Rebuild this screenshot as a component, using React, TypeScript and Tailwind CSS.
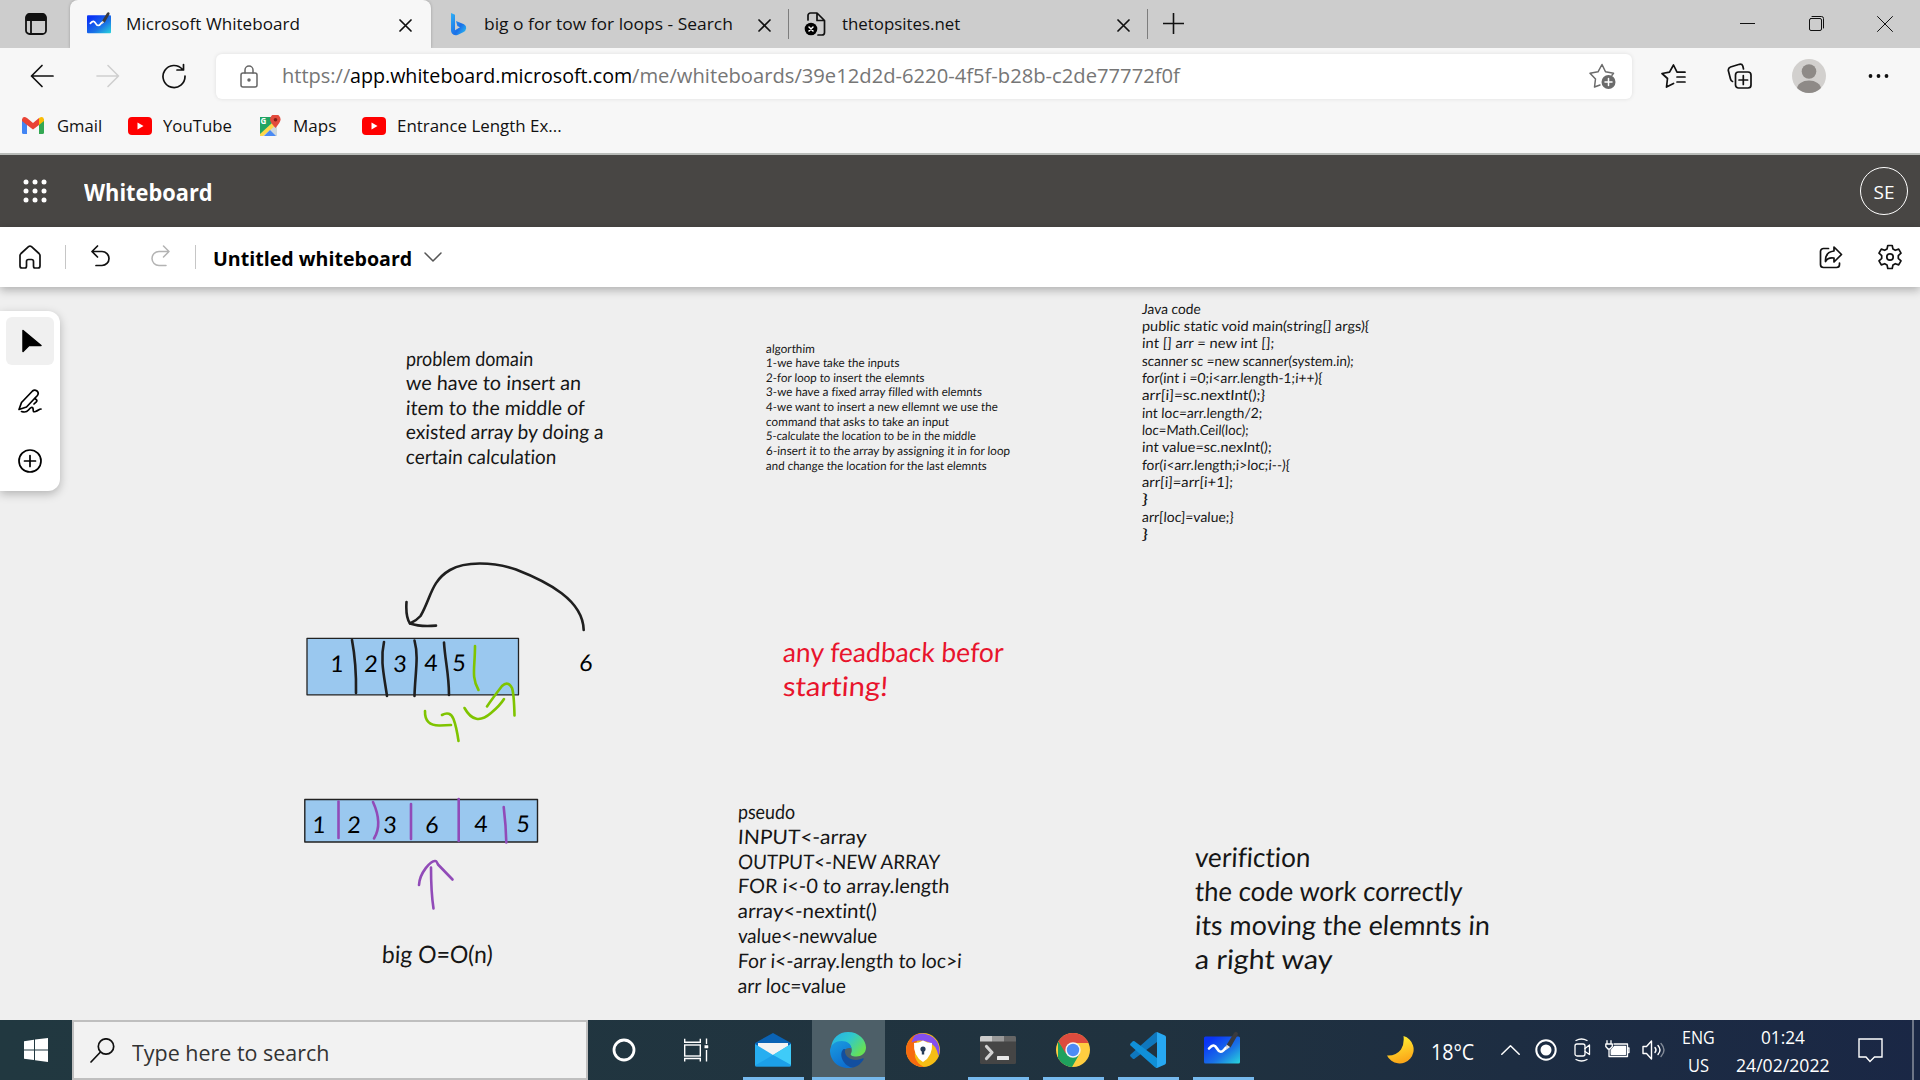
import { useLayoutEffect, useRef, useState } from "react";
import type { ReactNode } from "react";

/* Text condensed or widened to a fixed width */
function Fit({ w, className = "", children }: { w: number; className?: string; children: ReactNode }) {
  const ref = useRef<HTMLSpanElement>(null);
  const [scale, setScale] = useState(1);
  useLayoutEffect(() => {
    if (ref.current) setScale(w / ref.current.offsetWidth);
  }, [w]);
  return (
    <span className={`block shrink-0 whitespace-pre ${className}`} style={{ width: w }}>
      <span ref={ref} className="inline-block origin-left" style={{ transform: `scaleX(${scale})` }}>
        {children}
      </span>
    </span>
  );
}

type IconProps = { w: number; h: number; className?: string; sw?: number; children: ReactNode };
function Icon({ w, h, className = "", sw = 1.6, children }: IconProps) {
  return (
    <svg
      width={w}
      height={h}
      viewBox={`0 0 ${w} ${h}`}
      fill="none"
      stroke="currentColor"
      strokeWidth={sw}
      strokeLinecap="round"
      strokeLinejoin="round"
      className={`block shrink-0 ${className}`}
    >
      {children}
    </svg>
  );
}

function Close({ className = "" }: { className?: string }) {
  return (
    <Icon w={13} h={13} sw={1.7} className={className}>
      <path d="M1 1l11 11M12 1L1 12" />
    </Icon>
  );
}

function WhiteboardLogo({ className = "", id }: { className?: string; id: string }) {
  return (
    <svg viewBox="0 0 36 36" className={`block shrink-0 ${className}`}>
      <defs>
        <linearGradient id={id} x1="0" y1="0" x2="1" y2="1">
          <stop offset="0.15" stopColor="#0a35f5" />
          <stop offset="0.6" stopColor="#1a72e6" />
          <stop offset="1" stopColor="#29d6dc" />
        </linearGradient>
      </defs>
      <rect x="0" y="6.500" width="36" height="27" rx="1.500" fill={`url(#${id})`} />
      <path d="M5 18.500c4-4.500 6-3.500 8 0s4.500 5.500 9-1" fill="none" stroke="#fff" strokeWidth="2.600" strokeLinecap="round" />
      <path d="M30 3q1.500-1.800 3.200-.8 1.300 1.200.3 3L26.500 17.500 22.500 15z" fill="#3a3a3d" />
      <path d="M22.500 14.500l3.500 2.500-4 3z" fill="#e2ddd8" />
    </svg>
  );
}

function YouTube({ className = "" }: { className?: string }) {
  return (
    <svg width="24" height="18" viewBox="0 0 24 18" className={`block shrink-0 ${className}`}>
      <rect width="24" height="18" rx="4" fill="#f00" />
      <path d="M9.500 5.500v7l6-3.500z" fill="#fff" />
    </svg>
  );
}

function TabStrip() {
  return (
    <div className="flex h-12 shrink-0 items-center bg-[#cdcdcd] text-[17px] leading-6 text-[#111]">
      <Icon w={22} h={22} sw={1.8} className="ml-[25px]">
        <rect x="1" y="1" width="20" height="20" rx="3.500" />
        <path d="M1.500 5a3.500 3.500 0 013.500-3.500h12A3.500 3.500 0 0120.500 5v2h-19z" fill="currentColor" />
        <path d="M6 7v14" />
      </Icon>
      <div className="ml-[23px] flex h-12 w-[361px] items-center rounded-t-lg bg-[#f7f7f7] pl-[17px] shadow-[0_0_3px_rgba(0,0,0,0.25)]">
        <WhiteboardLogo id="wbTab" className="-mt-0.5 h-6 w-6" />
        <Fit w={174} className="ml-[15px]">Microsoft Whiteboard</Fit>
        <Close className="mt-0.5 mr-[19px] ml-auto" />
      </div>
      <svg width="17" height="24" viewBox="0 0 17 24" className="ml-[19px] block shrink-0">
        <defs>
          <linearGradient id="bing" x1="0" y1="0" x2="1" y2="1">
            <stop offset="0" stopColor="#2fb0f5" />
            <stop offset="0.6" stopColor="#1b6fe8" />
            <stop offset="1" stopColor="#2bc8f3" />
          </linearGradient>
        </defs>
        <path d="M1 1l4 1.800v15.500l5-3-2.600-1.300L6 9l8 3.200q2.500 1.300 2.200 4t-3 4L7.500 23Q4 24 2 21.500q-1-1.500-1-3z" fill="url(#bing)" />
      </svg>
      <Fit w={249} className="ml-[17px]">big o for tow for loops - Search</Fit>
      <Close className="mt-0.5 ml-[25px]" />
      <div className="ml-[17px] h-[30px] w-px bg-[#7d7d7d]" />
      <Icon w={22} h={24} sw={1.7} className="ml-[15px]">
        <path d="M4 8V3.500A2.500 2.500 0 016.500 1H13l7.500 7.500v12A2.500 2.500 0 0118 23h-4M13 1v7.500h7.500" />
        <circle cx="7" cy="17" r="6.300" fill="#000" stroke="none" />
        <path d="M5 15l4 4M9 15l-4 4" stroke="#fff" strokeWidth="1.500" />
      </Icon>
      <Fit w={118} className="ml-[16px]">thetopsites.net</Fit>
      <Close className="mt-0.5 ml-[157px]" />
      <div className="ml-[17px] h-[30px] w-px bg-[#7d7d7d]" />
      <Icon w={21} h={21} className="-mt-0.5 ml-[15px]">
        <path d="M10.500 .500v20M.500 10.500h20" />
      </Icon>
      <Icon w={15} h={15} sw={1} className="-mt-0.5 mr-[54px] ml-auto">
        <path d="M0 7.500h15" />
      </Icon>
      <Icon w={15} h={15} sw={1} className="-mt-px mr-[53px]">
        <rect x="0.500" y="2.500" width="12" height="12" rx="1.500" />
        <path d="M3 .500h9.500a2 2 0 012 2V12" />
      </Icon>
      <Icon w={16} h={16} sw={1} className="mr-[27px]">
        <path d="M.500 .500l15 15M15.500 .500l-15 15" />
      </Icon>
    </div>
  );
}

function AddressRow() {
  return (
    <div className="flex h-[56px] shrink-0 items-center bg-[#f7f7f7] text-[#111]">
      <Icon w={24} h={24} sw={1.7} className="ml-[30px]">
        <path d="M23 12H1.500M12 1.500L1.500 12 12 22.500" />
      </Icon>
      <Icon w={24} h={24} className="ml-[42px] text-[#cfcfcf]">
        <path d="M1 12h21.500M12 1.500L22.500 12 12 22.500" />
      </Icon>
      <Icon w={24} h={26} sw={1.7} className="ml-[42px]">
        <path d="M20.500 6.500A11 11 0 1023 13M21.500 1.500v5.500H15" />
      </Icon>
      <div className="ml-[30px] flex h-[45px] w-[1416px] items-center rounded-md bg-white pl-6 text-xl leading-7 text-[#767676] shadow-[0_0_4px_rgba(0,0,0,0.1)]">
        <Icon w={18} h={23} sw={1.5} className="text-[#666]">
          <rect x="1" y="8" width="16" height="14" rx="2" />
          <path d="M5 8V5a4 4 0 018 0v3" />
          <circle cx="9" cy="15" r="1" fill="currentColor" />
        </Icon>
        <div className="ml-6 flex">
          <Fit w={68}>https://</Fit>
          <Fit w={282} className="text-black">app.whiteboard.microsoft.com</Fit>
          <Fit w={548}>/me/whiteboards/39e12d2d-6220-4f5f-b28b-c2de77772f0f</Fit>
        </div>
        <Icon w={27} h={26} sw={1.5} className="mr-4 ml-auto text-[#6b6b6b]">
          <path d="M11 22l-5.500 2 1-8L1 10.300l8-1.500L13 1.500l3.500 7.300 8 1.500-1.500 2" />
          <circle cx="19.500" cy="19" r="7" fill="currentColor" stroke="none" />
          <path d="M19.500 15.500v7M16 19h7" stroke="#fff" />
        </Icon>
      </div>
      <Icon w={25} h={24} sw={1.7} className="ml-[29px]">
        <path d="M12.500 19.500L5.500 23l1-8.500L1 9.500l7.500-1.300L12.500 1l3.500 7.200h8M16 13h8M16 18h8" />
      </Icon>
      <Icon w={25} h={26} sw={1.7} className="ml-[41px]">
        <path d="M5.500 18.500q-1.500-.5-2-2.500L1.300 7.500Q1 5 3.500 4l9-2.700Q15 .800 15.800 3l.7 3" />
        <rect x="8.500" y="9" width="15.500" height="16" rx="3" />
        <path d="M16.300 12.500v9M12 17h8.600" />
      </Icon>
      <svg width="34" height="34" viewBox="0 0 34 34" className="ml-10 block shrink-0">
        <clipPath id="face"><circle cx="17" cy="17" r="17" /></clipPath>
        <g clipPath="url(#face)">
          <rect width="34" height="34" fill="#d2d0ce" />
          <circle cx="17" cy="12.500" r="7.300" fill="#8e8a87" />
          <ellipse cx="17" cy="30" rx="12" ry="8.500" fill="#8e8a87" />
        </g>
      </svg>
      <Icon w={21} h={6} className="ml-[42px]">
        <g fill="currentColor" stroke="none">
          <circle cx="2.500" cy="3" r="1.900" /><circle cx="10.500" cy="3" r="1.900" /><circle cx="18.500" cy="3" r="1.900" />
        </g>
      </Icon>
    </div>
  );
}

function Bookmarks() {
  return (
    <div className="flex h-[51px] shrink-0 items-center border-b-2 border-[#b9bcb9] bg-[#f7f7f7] pb-[6px] text-[17px] leading-6 text-[#111]">
      <svg width="22" height="17" viewBox="0 0 22 17" className="ml-[22px] block shrink-0">
        <path d="M0 2v13.500Q0 17 1.500 17H5V6z" fill="#4285f4" />
        <path d="M22 2v13.500q0 1.500-1.500 1.500H17V6z" fill="#34a853" />
        <path d="M17 1v7l5-4V2.500Q21.500-.500 18.500.200z" fill="#fbbc04" />
        <path d="M0 4l5 4 6 4.500L17 8V1l-6 5-6-5Q1-1.500 0 2.500z" fill="#ea4335" />
      </svg>
      <Fit w={45} className="ml-[13px]">Gmail</Fit>
      <YouTube className="ml-[26px]" />
      <Fit w={69} className="ml-[11px]">YouTube</Fit>
      <svg width="22" height="22" viewBox="0 0 22 22" className="ml-[27px] block shrink-0">
        <path d="M1 2h11l6 8v11H1z" fill="#cfd8dc" />
        <path d="M1 2h12v7L1 20z" fill="#1fa463" />
        <path d="M1 19L13 8l3 3L4 21H1z" fill="#fdd74b" />
        <path d="M5 21l6-6 6 6z" fill="#4a8af4" />
        <text x="1.500" y="9" fontSize="8" fontWeight="700" fontFamily="Open Sans" fill="#fff">G</text>
        <path d="M16.500 13Q11 7 11 4.500a5.300 5.300 0 0110.600 0Q21.500 7 16.500 13z" fill="#e34a3c" />
        <circle cx="16.500" cy="4.800" r="1.800" fill="#7d1f16" />
      </svg>
      <Fit w={43} className="ml-3">Maps</Fit>
      <YouTube className="ml-[26px]" />
      <Fit w={165} className="ml-[11px]">Entrance Length Ex...</Fit>
    </div>
  );
}

function AppHeader() {
  return (
    <div className="flex h-[72px] shrink-0 items-center bg-[#484644] text-white">
      <svg width="24" height="24" viewBox="0 0 24 24" fill="#fff" className="-mt-px ml-[23px] block shrink-0">
        {[3, 12, 21].map((y) => [3, 12, 21].map((x) => <circle key={`${x}-${y}`} cx={x} cy={y} r="2.500" />))}
      </svg>
      <Fit w={129} className="mt-0.5 ml-[37px] text-[23px] leading-8 font-bold">Whiteboard</Fit>
      <div className="mr-3 ml-auto flex size-12 items-center justify-center rounded-full border border-white">
        <Fit w={21} className="mt-px text-[19px] leading-6 font-medium">SE</Fit>
      </div>
    </div>
  );
}

function BoardBar() {
  return (
    <div className="relative z-10 flex h-[60px] shrink-0 items-center bg-white text-[#111] shadow-[0_3px_9px_rgba(0,0,0,0.28)]">
      <Icon w={22} h={24} sw={1.7} className="ml-[19px]">
        <path d="M1 10.500q0-1 1-2L9.500 1.700q1.500-1.200 3 0L20 8.500q1 1 1 2V21q0 2-2 2h-3q-1.500 0-1.500-2v-4.500q0-2-2-2h-3q-2 0-2 2V21q0 2-1.500 2H3q-2 0-2-2z" />
      </Icon>
      <div className="ml-6 h-6 w-px bg-[#c6c6c6]" />
      <Icon w={19} h={22} sw={1.7} className="-mt-0.5 ml-[25px]">
        <path d="M6.500 1L1 6.500 6.500 12M1 6.500h10a7 7 0 010 14H5" />
      </Icon>
      <Icon w={19} h={22} sw={1.5} className="-mt-0.5 ml-[41px] text-[#b3b3b3]">
        <path d="M12.500 1L18 6.500 12.500 12M18 6.500H8a7 7 0 000 14h7" />
      </Icon>
      <div className="ml-[25px] h-6 w-px bg-[#c6c6c6]" />
      <Fit w={199} className="mt-[3px] ml-[17px] text-[20px] leading-7 font-bold text-black">Untitled whiteboard</Fit>
      <Icon w={18} h={10} sw={1.5} className="ml-3 text-[#555]">
        <path d="M1 1l8 8 8-8" />
      </Icon>
      <Icon w={24} h={23} sw={1.7} className="mr-[34px] ml-auto">
        <path d="M9.500 2.500H4.500a3 3 0 00-3 3v13a3 3 0 003 3h13a3 3 0 003-3V17" />
        <path d="M15 1l7.500 7.500L15 16v-4q-6-1-8.500 3.500Q6 6 15 5z" />
      </Icon>
      <Icon w={26} h={26} sw={1.7} className="mr-[17px]">
        <path d="M10.800 1.500h4.400l.8 3.600 2.300 1.200 3.400-1.200 2.300 4-2.700 2.500v2.800l2.700 2.500-2.300 4-3.400-1.200-2.300 1.200-.8 3.600h-4.400l-.8-3.600-2.300-1.200-3.400 1.200-2.300-4 2.700-2.500v-2.800L2 9.100l2.300-4 3.400 1.200L10 5.100z" />
        <circle cx="13" cy="13" r="3.200" />
      </Icon>
    </div>
  );
}

type Note = { x: number; y: number; size: string; color?: string; lines: [string, number][] };

const notes: Note[] = [
  {
    x: 406, y: 58.5, size: "text-[20px] leading-[24.500px]",
    lines: [["problem domain", 127], ["we have to insert an", 175], ["item to the middle of", 179], ["existed array by doing a", 198], ["certain calculation", 150]],
  },
  {
    x: 766, y: 54.5, size: "text-[12px] leading-[14.650px]",
    lines: [
      ["algorthim", 49], ["1-we have take the inputs", 133], ["2-for loop to insert the elemnts", 159],
      ["3-we have a fixed array filled with elemnts", 216], ["4-we want to insert a new ellemnt we use the", 232],
      ["command that asks to take an input", 183], ["5-calculate the location to be in the middle", 210],
      ["6-insert it to the array by assigning it in for loop", 244], ["and change the location for the last elemnts", 221],
    ],
  },
  {
    x: 1142, y: 12.5, size: "text-[14px] leading-[17.350px]",
    lines: [
      ["Java code", 59], ["public static void main(string[] args){", 227], ["int [] arr = new int [];", 132],
      ["scanner sc =new scanner(system.in);", 212], ["for(int i =0;i<arr.length-1;i++){", 181], ["arr[i]=sc.nextInt();}", 123],
      ["int loc=arr.length/2;", 120], ["loc=Math.Ceil(loc);", 107], ["int value=sc.nexInt();", 130],
      ["for(i<arr.length;i>loc;i--){", 148], ["arr[i]=arr[i+1];", 91], ["}", 6], ["arr[loc]=value;}", 92], ["}", 6],
    ],
  },
  { x: 783, y: 348, size: "text-[27px] leading-[34px]", color: "text-[#e8142c]", lines: [["any feadback befor", 221], ["starting!", 105]] },
  {
    x: 738, y: 512, size: "text-[20px] leading-[24.800px]",
    lines: [
      ["pseudo", 57], ["INPUT<-array", 129], ["OUTPUT<-NEW ARRAY", 202], ["FOR i<-0 to array.length", 212],
      ["array<-nextint()", 139], ["value<-newvalue", 139], ["For i<-array.length to loc>i", 224], ["arr loc=value", 108],
    ],
  },
  {
    x: 1195, y: 553, size: "text-[27px] leading-[34px]",
    lines: [["verifiction", 116], ["the code work correctly", 268], ["its moving the elemnts in", 295], ["a right way", 138]],
  },
  { x: 382, y: 653, size: "text-[24px] leading-[28px]", lines: [["big O=O(n)", 111]] },
];

const digits: [string, number, number][] = [
  ["1", 337, 672], ["2", 371, 672], ["3", 400, 672], ["4", 431, 671], ["5", 459, 671], ["6", 586, 671],
  ["1", 319, 833], ["2", 354, 833], ["3", 390, 833], ["6", 432, 833], ["4", 481, 832], ["5", 523, 832],
];

function ToolPanel() {
  return (
    <div className="absolute top-6 left-0 flex h-[180px] w-[60px] flex-col items-center gap-3 rounded-r-xl bg-white pt-1.5 text-black shadow-[0_3px_10px_rgba(0,0,0,0.25)]">
      <div className="flex size-12 items-center justify-center rounded-md bg-[#f0f0f0]">
        <Icon w={20} h={24} sw={1.5} className="ml-1">
          <path d="M1 1.500v21L7 16.500h12z" fill="currentColor" />
        </Icon>
      </div>
      <div className="flex size-12 items-center justify-center">
        <Icon w={24} h={24} sw={1.700}>
          <path d="M1 20.500l2.500-7L14.500 2q2-1.800 4.500 0 2.200 2 .4 4.500L8.500 18z" />
          <path d="M17 9.500l1.500 1.300q.8 1-.2 2L16 15M3.500 22.500c3 1 5 1 7-1.500s4-3.500 4.500-1.500-.5 4 2.500 3 3.500-2.500 5.500-2.500" />
        </Icon>
      </div>
      <div className="flex size-12 items-center justify-center">
        <Icon w={24} h={24} sw={1.7}>
          <circle cx="12" cy="12" r="11" />
          <path d="M12 6.500v11M6.500 12h11" />
        </Icon>
      </div>
    </div>
  );
}

function Canvas() {
  return (
    <div className="relative h-[733px] shrink-0 overflow-hidden bg-[#efefef]">
      <svg className="absolute inset-0" width="1920" height="733" viewBox="0 287 1920 733" fill="none" strokeLinecap="round" strokeLinejoin="round">
        <rect x="307" y="638.300" width="211.500" height="56.500" fill="#9ac8ef" stroke="#222" strokeWidth="1.300" />
        <rect x="304.800" y="799.500" width="232.700" height="42.500" fill="#9ac8ef" stroke="#222" strokeWidth="1.400" />
        <g stroke="#1f1f1f" strokeWidth="2.600">
          <path d="M352 640Q356.500 664 356 693" />
          <path d="M384 642C380 660 384 675 387 696" />
          <path d="M414.500 640.500C419 657 415 674 414.500 696" />
          <path d="M444 642.500C445 660 449 674 449 695" />
          <path d="M583.700 630C583 600 548 582 516 569.500 492 561.500 465 561.500 450 570 431 581 431 598 420.500 616 Q416 621 410 623.500 Q405.500 617 406.500 602" />
          <path d="M410 623.500Q420 627 436 625.600" />
        </g>
        <g stroke="#7fc400" strokeWidth="2.600">
          <path d="M475 646C475 668 471 677 478.500 690" />
          <path d="M487 706.500Q492 699 502 686Q508 680.500 512 688Q514 694 514.500 715.500" />
          <path d="M464.500 708Q475 727 491 713Q500 705.500 504 699" />
          <path d="M425 711Q424.500 726 440 725.500L451 725" />
          <path d="M442 715Q450 710.500 453.500 719Q456.500 727 458.500 741" />
        </g>
        <g stroke="#914bb8" strokeWidth="2.600">
          <path d="M338.500 801.500V838" />
          <path d="M373 802Q383 824 374 838.500" />
          <path d="M411 804V839" />
          <path d="M458.700 799V841" />
          <path d="M503.700 807Q506 826 506.300 842.500" />
          <path d="M419 885C419.500 873 431 860 435.500 861Q436.500 861 438 864.500 L452.500 879.500" />
          <path d="M431 867.500Q431 892 433.500 908.500" />
        </g>
      </svg>
      {digits.map(([d, x, y], i) => (
        <span
          key={i}
          className="absolute w-6 -translate-x-1/2 -skew-x-3 text-center text-[23px] leading-[23px] text-black"
          style={{ left: x, top: y - 287 - 20, fontFamily: "Lato, sans-serif" }}
        >
          {d}
        </span>
      ))}
      {notes.map((n, i) => (
        <div
          key={i}
          className={`absolute font-['Lato',sans-serif] [font-variant-ligatures:none] ${n.size} ${n.color ?? "text-[#161616]"}`}
          style={{ left: n.x, top: n.y }}
        >
          {n.lines.map(([t, w], j) => (
            <Fit key={j} w={w}>
              <span className="inline-block -skew-x-3">{t}</span>
            </Fit>
          ))}
        </div>
      ))}
      <ToolPanel />
    </div>
  );
}

function Running({ className, children }: { className: string; children: ReactNode }) {
  return (
    <div className={`flex h-[60px] shrink-0 items-center justify-center border-y-[3px] border-t-transparent border-b-[#76b9ed] ${className}`}>
      {children}
    </div>
  );
}

function Taskbar() {
  return (
    <div className="flex h-[60px] shrink-0 items-center bg-linear-to-r from-[#213840] via-[#20323f] via-60% to-[#1a2745] text-white">
      <svg width="24" height="24" viewBox="0 0 24 24" fill="#fff" className="ml-6 block shrink-0">
        <path d="M0 3.300L10 1.800V11.400H0zM11 1.600L24 0v11.400H11zM0 12.400h10V22L0 20.700zM11 12.400h13V24l-13-1.800z" />
      </svg>
      <div className="ml-6 flex h-[60px] w-[516px] shrink-0 items-center border-2 border-[#bfbfbf] bg-[#f2f2f2] pl-4 text-[#333]">
        <Icon w={25} h={25} sw={1.7} className="text-[#111]">
          <circle cx="16" cy="8.500" r="7.700" />
          <path d="M10.500 14L1 24" />
        </Icon>
        <Fit w={197} className="mt-[3px] ml-[17px] text-[22px] leading-7">Type here to search</Fit>
      </div>
      <Icon w={24} h={24} sw={2.8} className="ml-6">
        <circle cx="12" cy="12" r="10" />
      </Icon>
      <Icon w={25} h={24} sw={1.4} className="ml-12">
        <rect x="0.700" y="7" width="15.600" height="11" strokeLinejoin="miter" />
        <path d="M.700 .700v3.500h15.600V.700M.700 23.500V20.500h15.600v3M22.500 .500v5.500M22.500 12v11.500" strokeLinecap="butt" strokeLinejoin="miter" />
        <path d="M21 7.500h3v2.500h-3z" fill="currentColor" strokeWidth=".5" />
      </Icon>
      <Running className="ml-[34px] w-[61px] pr-0.5">
        <svg width="36" height="34" viewBox="0 0 36 34">
          <path d="M0 10L18 0l18 10v5H0z" fill="#0a63b5" />
          <path d="M3 10h30v8L18 25 3 18z" fill="#f3f3f3" />
          <path d="M0 11l18 11L36 11v21q0 1.500-1.500 1.500h-33Q0 33.500 0 32z" fill="#27aef0" />
          <path d="M18 22l18-11v21z" fill="#3fcbf8" />
          <path d="M18 22l18 10q0 1.500-1.500 1.500h-33Q0 33.500 0 32.500z" fill="#1a9ae6" opacity=".75" />
        </svg>
      </Running>
      <Running className="ml-2 w-[73px] bg-[#4d5f68] pr-0.5">
        <svg width="36" height="36" viewBox="0 0 36 36">
          <defs>
            <linearGradient id="edgeTop" x1="0" y1="0" x2="1" y2=".6">
              <stop offset="0" stopColor="#26aee8" />
              <stop offset=".5" stopColor="#2fc8cf" />
              <stop offset="1" stopColor="#67e055" />
            </linearGradient>
            <linearGradient id="edgeLow" x1="0" y1="0" x2=".5" y2="1">
              <stop offset="0" stopColor="#1b9de0" />
              <stop offset="1" stopColor="#0d6fd0" />
            </linearGradient>
          </defs>
          <path d="M1 16C2 6 9 0 18 0c11 0 18 8 18 15.500 0 6-5 9-9.500 9-5 0-6.500-1.500-5.500-3 2.500-4-.5-11.500-9-11.500-5 0-9 2.500-11 6z" fill="url(#edgeTop)" />
          <path d="M0 18C1 12 6 9 11.500 9c6 0 10 3.500 10 7.500-6-2-10 4-8 10 1.500 5 5 8 9.500 9C10 38.500-.500 29.500 0 18z" fill="url(#edgeLow)" />
          <path d="M13.500 17c-3 3-3 8 0 12.500 2.500 4 6.500 6 9.500 6 5-1 8.500-4.500 10.500-8 .5-1-.3-1.500-1.200-1-6.300 3-15 1-17-5-.5-1.500-.5-3 .2-4.500z" fill="#124f9f" />
        </svg>
      </Running>
      <svg width="34" height="34" viewBox="0 0 34 34" className="ml-[21px] block shrink-0">
        <circle cx="17" cy="17" r="17" fill="#f5bd15" />
        <path d="M18 34A17 17 0 0114 .300Q8 14 9 24q2 7 9 10z" fill="#f66a10" />
        <path d="M9 2.200A17 17 0 0132.500 23Q30 11 22 9 12 6 5.500 9.500 7 4.500 9 2.200z" fill="#8450ef" />
        <path d="M17 7.500q4 2.500 9 2.500 1 13-9 19Q7 23 8 10q5 0 9-2.500z" fill="#fff" />
        <circle cx="17" cy="16" r="2.600" fill="#273c58" />
        <path d="M15.800 16h2.400v5.500h-2.400z" fill="#273c58" />
      </svg>
      <Running className="ml-7 w-[61px] pr-0.5">
        <svg width="36" height="28" viewBox="0 0 36 28">
          <rect width="36" height="28" rx="1.500" fill="#454545" />
          <path d="M0 5.500V1.500Q0 0 1.500 0H12v5.500z" fill="#ccc" />
          <path d="M12 0h12v5.500H12z" fill="#999" />
          <path d="M24 0h10.500Q36 0 36 1.500v4H24z" fill="#666" />
          <path d="M6.500 10.500l5.500 6-5.500 6" fill="none" stroke="#d2d2d2" strokeWidth="3.200" strokeLinecap="round" strokeLinejoin="round" />
          <rect x="17" y="20" width="12" height="4" rx=".6" fill="#e8e8e8" />
        </svg>
      </Running>
      <Running className="ml-[14px] w-[61px] pr-0.5">
        <svg width="34" height="34" viewBox="0 0 34 34">
          <clipPath id="chromeDisc"><circle cx="17" cy="17" r="17" /></clipPath>
          <g clipPath="url(#chromeDisc)">
            <rect width="34" height="34" fill="#ffcd40" />
            <path d="M2 8V34h14l7.500-13-6.500-2-6.500 0z" fill="#1fa15d" />
            <path d="M0 0h34v10H17L9.500 20 2.200 8z" fill="#dd4b3e" />
          </g>
          <circle cx="17" cy="17" r="7.700" fill="#f5f5f5" />
          <circle cx="17" cy="17" r="6.200" fill="#4c8bf5" />
        </svg>
      </Running>
      <Running className="ml-[14px] w-[61px] pr-0.5">
        <svg width="36" height="36" viewBox="0 0 36 36">
          <path d="M2.800 26.800L.500 24.500q-.8-1 0-2L25 .8Q26 0 27 0v10L4.500 26.800q-.8.600-1.700 0z" fill="#0f77bd" />
          <path d="M2.800 9.200L.500 11.500q-.8 1 0 2L25 35.200q1 .8 2 .8V26L4.500 9.200q-.8-.6-1.700 0z" fill="#1090d8" />
          <path d="M27 0l8 3.500q1 .5 1 2v25q0 1.500-1 2L27 36q-.5 0-1-.5 1 .2 1-1.500z" fill="#27a8f2" />
        </svg>
      </Running>
      <Running className="ml-[14px] w-[61px] pr-[3px]">
        <WhiteboardLogo id="wbTask" className="-mt-1 h-9 w-9" />
      </Running>
      <svg width="28" height="28" viewBox="0 0 28 28" className="ml-[133px] block shrink-0">
        <defs>
          <linearGradient id="moon" x1="0" y1="0" x2="0.300" y2="1">
            <stop offset="0.300" stopColor="#ffe32e" />
            <stop offset="1" stopColor="#fba81a" />
          </linearGradient>
        </defs>
        <path d="M16.500 0A14 14 0 1 1 0 19.500Q9 20 14 13.500 17.500 8 16.500 0z" fill="url(#moon)" />
      </svg>
      <Fit w={43} className="mt-[3px] ml-4 text-[21px] leading-7">18°C</Fit>
      <Icon w={19} h={10} sw={1.5} className="ml-[27px]">
        <path d="M.800 9.200l8.700-8.400 8.700 8.400" />
      </Icon>
      <Icon w={22} h={22} sw={2} className="ml-[15px]">
        <circle cx="11" cy="11" r="9.700" />
        <circle cx="11" cy="11" r="4.500" fill="currentColor" />
      </Icon>
      <Icon w={17} h={24} sw={1.3} className="ml-[17px]">
        <rect x="1" y="6" width="10" height="12" rx="2" />
        <path d="M11 10.500L15.500 7v9.500L11 13.500M2 2.500Q7.500-.500 13 2.500M2 21.500q5.500 3 11 0" />
      </Icon>
      <Icon w={25} h={18} sw={1.3} className="-mt-0.5 ml-[14px]">
        <path d="M2 .700v3M6 .700v3M.800 4h6.500v2.500L5 9H3L.800 6.500zM4 9v7.500h18.500V4H9M22.500 8h1.500v4.500h-1.500" />
        <path d="M9.500 6.300h11v8H6.200V10.500z" fill="currentColor" />
      </Icon>
      <Icon w={24} h={20} sw={1.4} className="ml-3">
        <path d="M1 6.500v7h3.500l5 5.500V1L4.500 6.500z" />
        <path d="M13 7.500q2 2.500 0 5M16 5.500q4 4.500 0 9" />
        <path d="M19 3.500q6 6.500 0 13" opacity=".45" />
      </Icon>
      <div className="mt-0.5 ml-4 flex w-8 shrink-0 flex-col items-center text-[18px] leading-7">
        <Fit w={33}>ENG</Fit>
        <Fit w={21}>US</Fit>
      </div>
      <div className="mt-0.5 ml-[22px] flex w-[94px] shrink-0 flex-col items-center text-[18px] leading-7">
        <Fit w={44}>01:24</Fit>
        <Fit w={94}>24/02/2022</Fit>
      </div>
      <Icon w={25} h={25} sw={1.4} className="ml-7">
        <path d="M1 1h23v18h-7.500L12 23.500 8 19H1z" strokeLinejoin="miter" />
      </Icon>
      <div className="mr-[6px] ml-auto h-[60px] w-0.5 bg-[#6d7587]" />
    </div>
  );
}

export default function App() {
  return (
    <div className="flex h-[1080px] w-[1920px] flex-col overflow-hidden font-['Open_Sans',sans-serif]">
      <TabStrip />
      <AddressRow />
      <Bookmarks />
      <AppHeader />
      <BoardBar />
      <Canvas />
      <Taskbar />
    </div>
  );
}
